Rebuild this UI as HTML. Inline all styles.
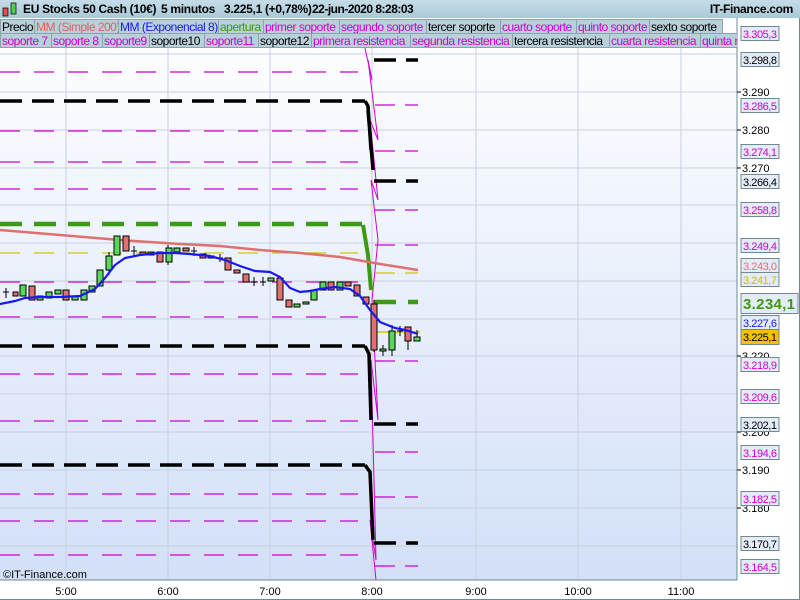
<!DOCTYPE html>
<html><head><meta charset="utf-8"><style>
body{margin:0;width:800px;height:600px;overflow:hidden;background:#fff;font-family:"Liberation Sans",sans-serif;}
#top{position:absolute;left:0;top:0;width:800px;height:18px;background:linear-gradient(#c6dde8,#a9c9d8);font-weight:bold;font-size:12px;line-height:18px;}
#top span{position:absolute;top:0;white-space:nowrap;letter-spacing:-0.3px}
.leg{position:absolute;left:0;height:15px;font-size:12px;line-height:14px;white-space:nowrap;width:737px;overflow:hidden}
.leg span{position:absolute;top:0;background:#b9cfd9;border:1px solid #8aa3ae;padding:0 1px;overflow:hidden;box-sizing:border-box;height:15px;letter-spacing:-0.5px}
.m{color:#d000d0}.k{color:#000}
svg{position:absolute;left:0;top:0}
</style></head><body>
<svg width="800" height="600">
<defs><linearGradient id="bg" x1="0" y1="0" x2="0" y2="1"><stop offset="0" stop-color="#fdfdff"/><stop offset="1" stop-color="#d2e0f8"/></linearGradient></defs>
<rect x="0" y="48" width="737" height="532" fill="url(#bg)"/>
<rect x="737" y="0" width="63" height="600" fill="#fff"/>
<rect x="0" y="580" width="800" height="20" fill="#fff"/>
<g stroke="#c8d0e0" stroke-width="1">
<line x1="66" y1="48" x2="66" y2="580"/><line x1="168" y1="48" x2="168" y2="580"/><line x1="270" y1="48" x2="270" y2="580"/><line x1="372" y1="48" x2="372" y2="580"/><line x1="476" y1="48" x2="476" y2="580"/><line x1="578" y1="48" x2="578" y2="580"/><line x1="681" y1="48" x2="681" y2="580"/>
<line x1="0" y1="54" x2="737" y2="54"/><line x1="0" y1="92" x2="737" y2="92"/><line x1="0" y1="130" x2="737" y2="130"/><line x1="0" y1="168" x2="737" y2="168"/><line x1="0" y1="205" x2="737" y2="205"/><line x1="0" y1="243" x2="737" y2="243"/><line x1="0" y1="281" x2="737" y2="281"/><line x1="0" y1="319" x2="737" y2="319"/><line x1="0" y1="356" x2="737" y2="356"/><line x1="0" y1="394" x2="737" y2="394"/><line x1="0" y1="432" x2="737" y2="432"/><line x1="0" y1="470" x2="737" y2="470"/><line x1="0" y1="508" x2="737" y2="508"/><line x1="0" y1="546" x2="737" y2="546"/>
</g>
<g fill="none" stroke-dasharray="20 14">
<g stroke="#d000d0" stroke-width="1.3">
<path d="M0 72H358"/><path d="M0 131H358"/><path d="M0 162H358"/><path d="M0 189H358"/><path d="M0 282H358"/><path d="M0 317H358"/><path d="M0 374H358"/><path d="M0 421H358"/><path d="M0 494H358"/><path d="M0 521H358"/><path d="M0 555H358"/>
</g>
<path d="M0 253H358" stroke="#d0c800" stroke-width="1.3"/>
<g stroke="#000" stroke-width="3.5" stroke-dasharray="22 10"><path d="M0 101H365"/><path d="M0 346H365"/><path d="M0 465H365"/></g>
<path d="M0 224H362" stroke="#3c9a10" stroke-width="4.5" stroke-dasharray="22 12"/>
</g>
<g fill="none" stroke="#d000d0" stroke-width="1"><path d="M365 48L372 80L368 60L378 140L370 120L378 200L371 180L378 240L372 300L378 420L371 360L376 560L370 520L376 580"/></g>
<g fill="none" stroke="#000" stroke-width="3.5"><path d="M365 101L368 106L371 150M368 110L373 170"/><path d="M365 346L369 354L371 420"/><path d="M365 465L370 472L373 540"/></g>
<path d="M363 225L368 255L371 290" stroke="#3c9a10" stroke-width="4" fill="none"/>
<g fill="none">
<g stroke="#d000d0" stroke-width="1.3" stroke-dasharray="20 10"><path d="M375 105H418"/><path d="M375 151H418"/><path d="M375 210H418"/><path d="M375 245H418"/><path d="M375 361H418"/><path d="M375 452H418"/><path d="M375 497H418"/><path d="M375 566H418"/></g>
<path d="M375 273H418" stroke="#d0c800" stroke-width="1.3" stroke-dasharray="20 10"/>
<g stroke="#000" stroke-width="3.5" stroke-dasharray="22 10"><path d="M374 60H418"/><path d="M374 181H418"/><path d="M374 424H418"/><path d="M374 543H418"/></g>
<path d="M374 302H418" stroke="#3c9a10" stroke-width="4.5" stroke-dasharray="22 12"/>
<path d="M376 332H420" stroke="#d0c800" stroke-width="1.5"/>
</g>
<path d="M0 230L60 235L120 240L180 244L220 246L260 250L300 253L340 257L380 264L418 270" stroke="#e07070" stroke-width="2.5" fill="none"/>
<g stroke="#000" stroke-width="1">
<path d="M6 288V298M3 292H9M134 246V256M131 251H137M194 247V256M191 251H197M220 254V262M217 258H223M254 277V286M251 282H257M263 277V286M260 282H266M400 326V336M397 331H403M383 345V356M392 325V356M408 335V350M417 330V338M374 300V352M168 245V265M109 252V275"/>
<g fill="#e07070">
<rect x="13" y="292" width="5" height="4"/><rect x="29" y="286" width="6" height="14"/><rect x="63" y="290" width="6" height="10"/><rect x="123" y="236" width="6" height="15"/><rect x="140" y="252" width="6" height="3"/><rect x="157" y="252" width="6" height="10"/><rect x="183" y="248" width="6" height="3"/><rect x="200" y="254" width="6" height="4"/><rect x="208" y="256" width="6" height="2"/><rect x="225" y="258" width="6" height="12"/><rect x="234" y="270" width="6" height="3"/><rect x="243" y="274" width="6" height="8"/><rect x="277" y="278" width="6" height="22"/><rect x="286" y="300" width="6" height="7"/><rect x="328" y="282" width="6" height="8"/><rect x="345" y="282" width="6" height="4"/><rect x="354" y="285" width="6" height="11"/><rect x="363" y="297" width="6" height="7"/><rect x="371" y="304" width="6" height="46"/><rect x="405" y="327" width="6" height="14"/>
</g>
<g fill="#5ad85a">
<rect x="20" y="285" width="6" height="11"/><rect x="37" y="296" width="6" height="4"/><rect x="46" y="292" width="6" height="6"/><rect x="55" y="290" width="6" height="4"/><rect x="72" y="296" width="6" height="4"/><rect x="81" y="290" width="6" height="10"/><rect x="89" y="286" width="6" height="6"/><rect x="97" y="270" width="6" height="16"/><rect x="106" y="256" width="6" height="14"/><rect x="114" y="236" width="6" height="19"/><rect x="148" y="252" width="6" height="3"/><rect x="166" y="248" width="6" height="14"/><rect x="174" y="248" width="6" height="4"/><rect x="268" y="278" width="6" height="3"/><rect x="294" y="304" width="6" height="3"/><rect x="303" y="302" width="6" height="2"/><rect x="311" y="290" width="6" height="10"/><rect x="320" y="282" width="6" height="8"/><rect x="337" y="282" width="6" height="8"/><rect x="380" y="349" width="6" height="2"/><rect x="389" y="331" width="6" height="19"/><rect x="414" y="337" width="6" height="4"/>
</g></g>
<path d="M0 304L15 301L25 298L40 297L60 297L80 296L95 289L105 278L115 265L125 258L140 255L160 253L175 253L190 254L210 256L225 260L240 266L255 271L270 272L280 277L290 288L300 292L310 291L320 289L335 287L350 289L360 296L370 310L380 322L395 328L405 330L418 334" stroke="#1818f0" stroke-width="2.2" fill="none"/>
<line x1="737" y1="0" x2="737" y2="580" stroke="#708890"/>
<line x1="0" y1="580" x2="737" y2="580" stroke="#708890"/>
<line x1="0" y1="599.5" x2="800" y2="599.5" stroke="#708890"/>
<line x1="799.5" y1="0" x2="799.5" y2="600" stroke="#708890"/>
<text x="3" y="578" font-size="11" font-family="Liberation Sans">©IT-Finance.com</text>
<g font-size="11" font-family="Liberation Sans" text-anchor="middle"><text x="66" y="595">5:00</text><text x="168" y="595">6:00</text><text x="270" y="595">7:00</text><text x="372" y="595">8:00</text><text x="476" y="595">9:00</text><text x="578" y="595">10:00</text><text x="681" y="595">11:00</text></g>
<g font-size="11" font-family="Liberation Sans">
<g stroke="#000"><line x1="737" y1="92" x2="741" y2="92"/><line x1="737" y1="130" x2="741" y2="130"/><line x1="737" y1="168" x2="741" y2="168"/><line x1="737" y1="356" x2="741" y2="356"/><line x1="737" y1="432" x2="741" y2="432"/><line x1="737" y1="470" x2="741" y2="470"/><line x1="737" y1="508" x2="741" y2="508"/></g>
<text x="742" y="96">3.290</text><text x="742" y="134">3.280</text><text x="742" y="172">3.270</text><text x="742" y="60">3.300</text><text x="742" y="360">3.220</text><text x="742" y="436">3.200</text><text x="742" y="474">3.190</text><text x="742" y="512">3.180</text>
</g>
<g font-size="11" font-family="Liberation Sans" stroke-width="1">
<g fill="#e4ecf8" stroke="#708890">
<rect x="741" y="26.5" width="38" height="14"/><rect x="741" y="52.5" width="38" height="14"/><rect x="741" y="98.5" width="38" height="14"/><rect x="741" y="144.5" width="38" height="14"/><rect x="741" y="174.5" width="38" height="14"/><rect x="741" y="202.5" width="38" height="14"/><rect x="741" y="238.5" width="38" height="14"/><rect x="741" y="258.5" width="38" height="14"/><rect x="741" y="272.5" width="38" height="14"/><rect x="741" y="293.5" width="57" height="20"/><rect x="741" y="315.5" width="38" height="14"/><rect x="741" y="357.5" width="38" height="14"/><rect x="741" y="389.5" width="38" height="14"/><rect x="741" y="417.5" width="38" height="14"/><rect x="741" y="445.5" width="38" height="14"/><rect x="741" y="491.5" width="38" height="14"/><rect x="741" y="536.5" width="38" height="14"/><rect x="741" y="559.5" width="38" height="14"/>
</g>
<rect x="741" y="329.5" width="38" height="15" fill="#f8c000" stroke="#708890"/>
<g fill="#d000d0"><text x="743" y="38" textLength="34">3.305,3</text><text x="743" y="110" textLength="34">3.286,5</text><text x="743" y="156" textLength="34">3.274,1</text><text x="743" y="214" textLength="34">3.258,8</text><text x="743" y="250" textLength="34">3.249,4</text><text x="743" y="369" textLength="34">3.218,9</text><text x="743" y="401" textLength="34">3.209,6</text><text x="743" y="457" textLength="34">3.194,6</text><text x="743" y="503" textLength="34">3.182,5</text><text x="743" y="571" textLength="34">3.164,5</text></g>
<g fill="#000"><text x="743" y="64" textLength="34">3.298,8</text><text x="743" y="186" textLength="34">3.266,4</text><text x="743" y="429" textLength="34">3.202,1</text><text x="743" y="548" textLength="34">3.170,7</text><text x="743" y="341" textLength="34">3.225,1</text></g>
<text x="743" y="270" fill="#e07070" textLength="34">3.243,0</text><text x="743" y="284" fill="#c8c000" textLength="34">3.241,7</text><text x="743" y="327" fill="#1818f0" textLength="34">3.227,6</text>
<text x="743" y="309" fill="#3c9a10" font-size="15" font-weight="bold" textLength="52">3.234,1</text>
</g>
</svg>
<div id="top"><svg width="22" height="18" style="position:absolute;left:0;top:0"><rect x="3" y="8" width="5" height="8" fill="#e05050" stroke="#000" stroke-width=".7"/><rect x="11" y="3" width="5" height="11" fill="#50d050" stroke="#000" stroke-width=".7"/></svg>
<span style="left:23px">EU Stocks 50 Cash (10€)</span><span style="left:161px">5 minutos</span><span style="left:224px">3.225,1 (+0,78%)</span><span style="left:312px;letter-spacing:-0.5px">22-jun-2020 8:28:03</span>
<span style="right:7px">IT-Finance.com</span></div>
<div class="leg" style="top:19px">
<span class="k" style="left:0;width:35px">Precio</span><span style="left:34px;width:85px;color:#e06060">MM (Simple 200)</span><span style="left:118px;width:101px;color:#1818f0">MM (Exponencial 8)</span><span style="left:218px;width:46px;color:#3c9a10">apertura</span><span class="m" style="left:263px;width:77px">primer soporte</span><span class="m" style="left:339px;width:88px">segundo soporte</span><span class="k" style="left:426px;width:75px">tercer soporte</span><span class="m" style="left:500px;width:77px">cuarto soporte</span><span class="m" style="left:576px;width:74px">quinto soporte</span><span class="k" style="left:649px;width:74px">sexto soporte</span></div>
<div class="leg" style="top:33px">
<span class="m" style="left:0;width:52px">soporte 7</span><span class="m" style="left:51px;width:52px">soporte 8</span><span class="m" style="left:102px;width:48px">soporte9</span><span class="k" style="left:149px;width:56px">soporte10</span><span class="m" style="left:204px;width:55px">soporte11</span><span class="k" style="left:258px;width:54px">soporte12</span><span class="m" style="left:311px;width:100px">primera resistencia</span><span class="m" style="left:410px;width:103px">segunda resistencia</span><span class="k" style="left:512px;width:98px">tercera resistencia</span><span class="m" style="left:609px;width:92px">cuarta resistencia</span><span class="m" style="left:700px;width:60px">quinta resistencia</span></div>
</body></html>
